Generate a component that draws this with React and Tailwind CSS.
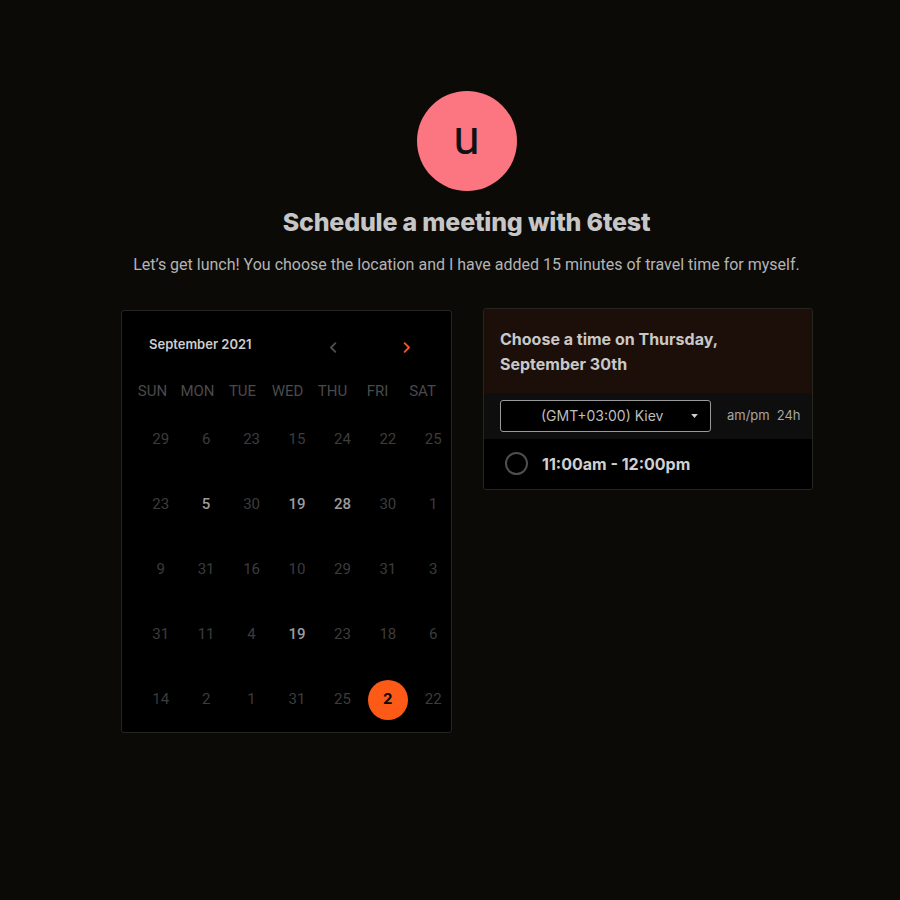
const weekdays = ["SUN", "MON", "TUE", "WED", "THU", "FRI", "SAT"];

// each cell: [label, state] where state: 0 = dim, 1 = available, 2 = selected
const weeks = [
  [["29", 0], ["6", 0], ["23", 0], ["15", 0], ["24", 0], ["22", 0], ["25", 0]],
  [["23", 0], ["5", 1], ["30", 0], ["19", 1], ["28", 1], ["30", 0], ["1", 0]],
  [["9", 0], ["31", 0], ["16", 0], ["10", 0], ["29", 0], ["31", 0], ["3", 0]],
  [["31", 0], ["11", 0], ["4", 0], ["19", 1], ["23", 0], ["18", 0], ["6", 0]],
  [["14", 0], ["2", 0], ["1", 0], ["31", 0], ["25", 0], ["2", 2], ["22", 0]],
];

const Chevron = ({ dir, className }) => (
  <svg viewBox="0 0 24 24" className={className} fill="none" stroke="currentColor" strokeWidth={3} strokeLinecap="round" strokeLinejoin="round">
    <path d={dir === "left" ? "M15 5l-7 7 7 7" : "M9 5l7 7-7 7"} />
  </svg>
);

const DayCell = ({ label, state }) => {
  if (state === 2) {
    return (
      <div className="flex items-center justify-center">
        <span className="w-10 h-10 rounded-full bg-[#fc5a16] text-black font-bold text-[15px] flex items-center justify-center font-['Inter']">
          {label}
        </span>
      </div>
    );
  }
  return (
    <div className={`flex items-center justify-center text-[15px] ${state === 1 ? "text-[#9c9c9c] font-medium" : "text-[#3c3c3c]"}`}>
      {label}
    </div>
  );
};

const Calendar = () => (
  <div className="w-[331px] h-[423px] shrink-0 bg-black border border-[#262522] rounded-[3px] pt-[24px] font-['Roboto',sans-serif]">
    <div className="flex items-center pl-[27px] h-[20px]">
      <span className="text-[13px] font-semibold text-[#cdcdcd] font-['Inter',sans-serif]">September 2021</span>
      <Chevron dir="left" className="w-[15px] h-[15px] text-[#4d4d4d] ml-[74px] mt-[6px]" />
      <Chevron dir="right" className="w-[15px] h-[15px] text-[#f05a22] ml-[58px] mt-[6px]" />
    </div>
    <div className="grid grid-cols-7 w-[315px] ml-[8px] mt-[25px] text-[15px] text-[#4a4a4a]">
      {weekdays.map((d) => (
        <div key={d} className="text-center">{d}</div>
      ))}
    </div>
    <div className="ml-[16px] w-[318px] mt-[5px]">
      {weeks.map((w, i) => (
        <div key={i} className="grid grid-cols-7 h-[65px]">
          {w.map(([label, state], j) => (
            <DayCell key={j} label={label} state={state} />
          ))}
        </div>
      ))}
    </div>
  </div>
);

const TimePanel = () => (
  <div className="w-[330px] shrink-0 border border-[#262522] rounded-[3px] overflow-hidden -mt-[2px] font-['Inter',sans-serif]">
    <div className="bg-[#1c0f0a] h-[84px] px-[16px] pt-[18px] text-[16px] leading-[25px] font-bold text-[#c8c8c8]">
      Choose a time on Thursday,
      <br />
      September 30th
    </div>
    <div className="bg-[#0e0e0e] h-[46px] flex items-center px-[16px]">
      <div className="w-[211px] h-[32px] shrink-0 bg-black border border-[#9a9a9a] rounded-[3px] flex items-center pl-[40px] pr-[12px]">
        <span className="text-[14px] text-[#bdbdbd] flex-1">(GMT+03:00) Kiev</span>
        <svg viewBox="0 0 10 6" className="w-[7px] h-[4px]" fill="#cfcfcf">
          <path d="M0 0h10L5 6z" />
        </svg>
      </div>
      <span className="ml-[16px] text-[13px] text-[#a6a6a6]">am/pm</span>
      <span className="ml-[7px] text-[13px] text-[#a6a6a6]">24h</span>
    </div>
    <div className="bg-black h-[50px] flex items-center px-[21px]">
      <span className="w-[23px] h-[23px] rounded-full border-2 border-[#4e4e4e]" />
      <span className="ml-[14px] text-[16px] font-bold text-[#d0d0d0]">11:00am - 12:00pm</span>
    </div>
  </div>
);

export default function App() {
  return (
    <div className="w-[900px] h-[900px] bg-[#0c0a07] overflow-hidden">
      <div className="ml-[121px] w-[691px] flex flex-col items-center pt-[91px]">
        <div className="w-[100px] h-[100px] rounded-full bg-[#fb7680] flex items-center justify-center">
          <span className="text-[48px] leading-none text-[#111] font-['Roboto',sans-serif] -mt-[6px]">u</span>
        </div>
        <h1 className="mt-[13px] text-[25px] font-extrabold text-[#c6c6c6] font-['Inter',sans-serif] tracking-[-0.2px]">
          Schedule a meeting with 6test
        </h1>
        <p className="mt-[11px] text-[16px] text-[#b4b4b4] font-['Roboto',sans-serif]">
          Let’s get lunch! You choose the location and I have added 15 minutes of travel time for myself.
        </p>
        <div className="flex gap-[31px] mt-[33px] self-stretch items-start">
          <Calendar />
          <TimePanel />
        </div>
      </div>
    </div>
  );
}
